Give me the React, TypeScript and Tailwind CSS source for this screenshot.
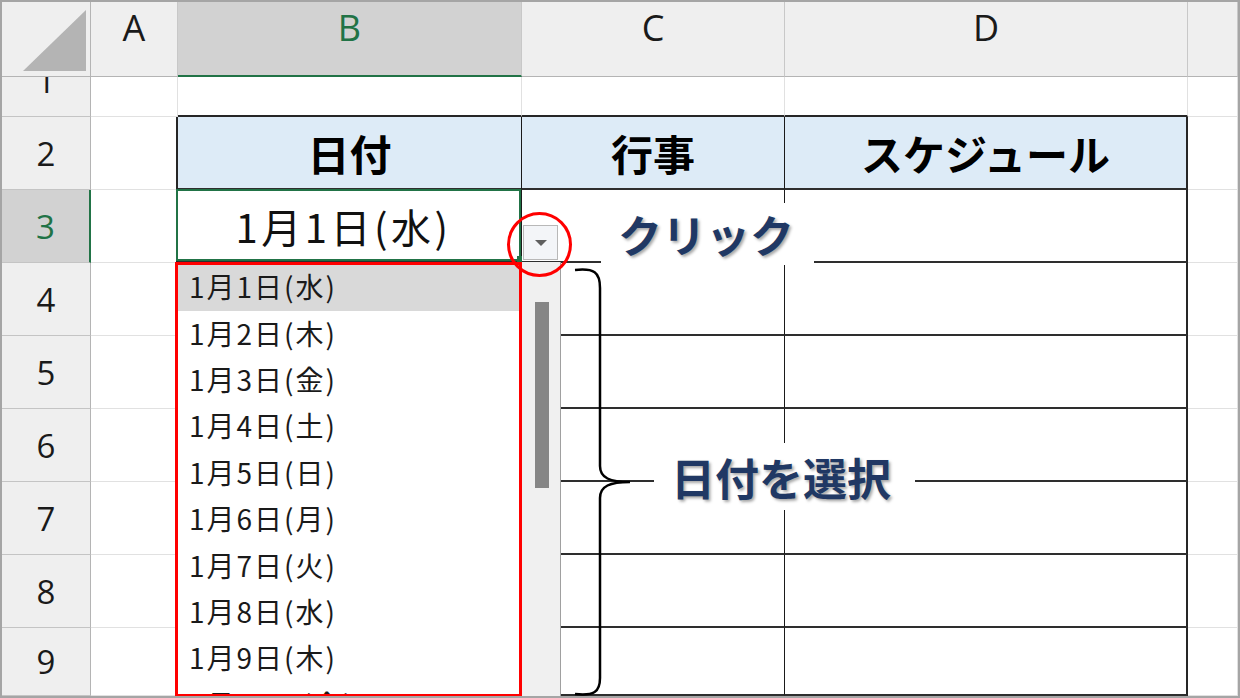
import React from "react";

const LETTERS = ["A", "B", "C", "D", ""];
const DAYS = ["水", "木", "金", "土", "日", "月", "火", "水", "木", "金"];
const HEAD: Record<number, string> = { 2: "日付", 3: "行事", 4: "スケジュール" };

const latin = "font-['Open_Sans','Noto_Sans',sans-serif]";
const jp = "font-['Noto_Sans_CJK_JP','Noto_Sans_CJK_SC',sans-serif]";

function Cell({ r, c }: { r: number; c: number }) {
  // column header row
  if (r === 0) {
    if (c === 0) {
      return (
        <div className="flex items-end justify-end pr-[4px] pb-[5px] bg-[#efefef] border-r border-r-[#b4b4b4] border-b border-b-[#b4b4b4]">
          <svg width="63" height="61" viewBox="0 0 63 61">
            <polygon points="0,61 63,0 63,61" fill="#b4b4b4" />
          </svg>
        </div>
      );
    }
    const sel = c === 2;
    return (
      <div
        className={
          "flex justify-center pt-[8px] text-[36px] leading-none border-r border-r-[#c8c8c8] " +
          latin +
          (sel
            ? " bg-[#d2d2d2] text-[#217346] border-b-2 border-b-[#217346]"
            : " bg-[#efefef] text-[#1a1a1a] border-b border-b-[#b4b4b4]")
        }
      >
        {LETTERS[c - 1]}
      </div>
    );
  }

  // row header column
  if (c === 0) {
    const sel = r === 3;
    return (
      <div
        className={
          "flex justify-center overflow-hidden text-[33px] leading-none border-b border-b-[#c4c4c4] " +
          latin +
          (r === 1 ? " items-start" : " items-center") +
          (sel
            ? " bg-[#d2d2d2] text-[#217346] border-r-2 border-r-[#217346]"
            : " bg-[#efefef] text-[#1a1a1a] border-r border-r-[#b4b4b4]")
        }
      >
        <span className={r === 1 ? "mt-[-13px]" : ""}>{r}</span>
      </div>
    );
  }

  const inTable = r >= 2 && c >= 2 && c <= 4;
  let right = "border-r border-r-[#e1e1e1]";
  if (c === 1 && r >= 2) right = "border-r-2 border-r-[#262626]";
  else if (inTable && c === 4) right = "border-r-2 border-r-[#262626]";
  else if (inTable) right = "border-r border-r-[#1a1a1a]";

  let bottom = "border-b border-b-[#e1e1e1]";
  if (r === 1 && c >= 2 && c <= 4) bottom = "border-b-2 border-b-[#262626]";
  else if (inTable) bottom = "border-b-2 border-b-[#2e2e2e]";

  const bg = r === 2 && inTable ? "bg-[#ddebf7]" : "bg-white";

  return (
    <div className={"relative flex items-center justify-center " + right + " " + bottom + " " + bg}>
      {r === 2 && inTable && (
        <span className={"text-[42px] font-bold text-black leading-none " + jp}>{HEAD[c]}</span>
      )}
      {r === 3 && c === 2 && (
        <>
          <span className={"text-[40px] tracking-[3.5px] text-[#111] leading-none pr-[12px] " + jp}>
            1月1日(水)
          </span>
          <div className="absolute top-[-1px] left-[-2px] right-0 bottom-0 border-2 border-[#217346]" />
          <div className="absolute right-[-2px] bottom-[-1px] w-[6px] h-[6px] bg-[#217346]" />
        </>
      )}
    </div>
  );
}

export default function App() {
  const rows = [0, 1, 2, 3, 4, 5, 6, 7, 8, 9];
  const cols = [0, 1, 2, 3, 4, 5];

  return (
    <div className="relative w-[1240px] h-[698px] overflow-hidden bg-white p-[2px]">
      <div className="grid grid-cols-[89px_87px_344px_263px_403px_50px] grid-rows-[75px_40px_73px_73px_73px_73px_73px_73px_73px_68px]">
        {rows.flatMap((r) => cols.map((c) => <Cell key={`${r}-${c}`} r={r} c={c} />))}
      </div>

      {/* dropdown list */}
      <div className="absolute left-[175px] top-[262px] h-[435px] flex">
        <div className="w-[347px] h-full border-[3px] border-[#ff0000] bg-white overflow-hidden">
          {DAYS.map((d, i) => (
            <div
              key={i}
              className={
                "h-[46.4px] flex items-center pl-[11px] pb-[4px] text-[28px] tracking-[2px] text-[#1a1a1a] leading-none " +
                jp +
                (i === 0 ? " bg-[#d9d9d9]" : "")
              }
            >
              1月{i + 1}日({d})
            </div>
          ))}
        </div>
        <div className="w-[39px] h-full bg-[#f0f0f0] border-r border-r-[#a0a0a0] pt-[40px] pl-[13px]">
          <div className="w-[14px] h-[186px] bg-[#868686]" />
        </div>
      </div>

      {/* dropdown button */}
      <div className="absolute left-[523px] top-[225px] w-[35px] h-[35px] border border-[#b8b8b8] bg-[#f3f5f8] flex items-center justify-center">
        <div className="w-0 h-0 border-l-[6px] border-r-[6px] border-t-[6px] border-l-transparent border-r-transparent border-t-[#5f5f5f]" />
      </div>

      {/* red circle */}
      <div className="absolute left-[507px] top-[212px] w-[65px] h-[65px] rounded-full border-[3px] border-[#ff0000]" />

      {/* click callout */}
      <div className="absolute left-[601px] top-[203px] w-[213px] h-[62px] bg-white flex items-center pl-[17px]">
        <span
          className={
            "text-[44px] font-bold text-[#203864] leading-none [text-shadow:2px_2px_3px_rgba(0,0,0,0.35)] " + jp
          }
        >
          クリック
        </span>
      </div>

      {/* brace */}
      <svg className="absolute left-[565px] top-[262px]" width="70" height="436" viewBox="0 0 70 436">
        <path
          d="M10 8 C29 6 35 10 35 26 L35 204 C35 216 45 220 65 220 C45 220 35 224 35 236 L35 416 C35 430 29 434 10 432"
          fill="none"
          stroke="#000"
          strokeWidth="2.5"
        />
      </svg>

      {/* select callout */}
      <div className="absolute left-[654px] top-[443px] w-[261px] h-[67px] bg-white flex items-center pl-[17px]">
        <span
          className={
            "text-[44px] font-bold text-[#203864] leading-none [text-shadow:2px_2px_3px_rgba(0,0,0,0.35)] " + jp
          }
        >
          日付を選択
        </span>
      </div>

      {/* outer frame */}
      <div className="absolute inset-0 border-2 border-[#a5a5a5] pointer-events-none" />
    </div>
  );
}
